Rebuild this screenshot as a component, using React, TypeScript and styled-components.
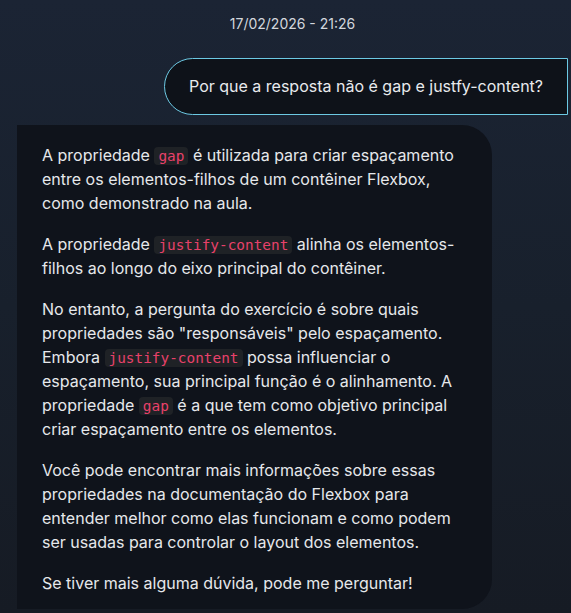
import React from "react";
import styled, { createGlobalStyle } from "styled-components";

const Global = createGlobalStyle`
  html, body { margin: 0; padding: 0; }
  body {
    width: 571px;
    height: 613px;
    overflow: hidden;
    background: linear-gradient(180deg, #1b2434 0%, #18202c 50%, #161b24 100%);
    font-family: Inter, "Noto Sans", sans-serif;
    -webkit-font-smoothing: antialiased;
  }
`;

const Page = styled.div`
  display: flex;
  flex-direction: column;
  padding: 15px 3px 0 17px;
  height: 613px;
  box-sizing: border-box;
`;

const DateLabel = styled.div`
  text-align: center;
  font-size: 14px;
  line-height: 18px;
  color: #d3d7dd;
  margin: 0 0 25px 0;
`;

const UserBubble = styled.div`
  align-self: flex-end;
  background: #0e1219;
  border: 1px solid #6cc9e3;
  border-radius: 29px 0 0 29px;
  padding: 15px 24px 15px 24px;
  font-size: 16px;
  line-height: 25px;
  color: #e8eaed;
  margin-bottom: 10px;
`;

const BotBubble = styled.div`
  width: 475px;
  box-sizing: border-box;
  background: #0f131b;
  border-radius: 0 30px 30px 0;
  padding: 18px 25px 14px 25px;
  color: #e6e8eb;
  font-size: 16px;
  line-height: 24px;
`;

const Para = styled.p`
  margin: 0 0 17px 0;
  &:last-child { margin-bottom: 0; }
`;

const Code = styled.code`
  font-family: "DejaVu Sans Mono", "Liberation Mono", monospace;
  font-size: 14.4px;
  line-height: 1;
  color: #e8416a;
  background: #1f2226;
  border-radius: 4px;
  padding: 1px 4px;
`;

export default function App() {
  return (
    <>
      <Global />
      <Page>
        <DateLabel>17/02/2026 - 21:26</DateLabel>
        <UserBubble>Por que a resposta não é gap e justfy-content?</UserBubble>
        <BotBubble>
          <Para>
            A propriedade <Code>gap</Code> é utilizada para criar espaçamento entre os
            elementos-filhos de um contêiner Flexbox, como demonstrado na aula.
          </Para>
          <Para>
            A propriedade <Code>justify-content</Code> alinha os elementos-filhos ao longo do
            eixo principal do contêiner.
          </Para>
          <Para>
            No entanto, a pergunta do exercício é sobre quais propriedades são
            "responsáveis" pelo espaçamento. Embora <Code>justify-content</Code> possa
            influenciar o espaçamento, sua principal função é o alinhamento. A propriedade{" "}
            <Code>gap</Code> é a que tem como objetivo principal criar espaçamento entre os
            elementos.
          </Para>
          <Para>
            Você pode encontrar mais informações sobre essas propriedades na documentação do
            Flexbox para entender melhor como elas funcionam e como podem ser usadas para
            controlar o layout dos elementos.
          </Para>
          <Para>Se tiver mais alguma dúvida, pode me perguntar!</Para>
        </BotBubble>
      </Page>
    </>
  );
}
